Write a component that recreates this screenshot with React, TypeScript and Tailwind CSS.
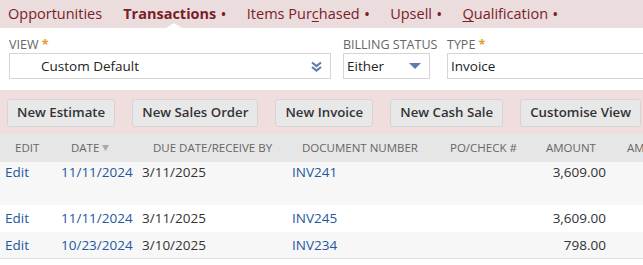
import React from "react";

const tabs = [
  { label: "Opportunities", active: false, dot: false },
  { label: "Transactions", active: true, dot: true },
  { label: "Items Purchased", active: false, dot: true, u: 9 },
  { label: "Upsell", active: false, dot: true },
  { label: "Qualification", active: false, dot: true, u: 0 },
];

const buttons = ["New Estimate", "New Sales Order", "New Invoice", "New Cash Sale", "Customise View"];

const rows = [
  { date: "11/11/2024", due: "3/11/2025", doc: "INV241", amount: "3,609.00", tall: true },
  { date: "11/11/2024", due: "3/11/2025", doc: "INV245", amount: "3,609.00" },
  { date: "10/23/2024", due: "3/10/2025", doc: "INV234", amount: "798.00" },
];

const cols = "grid grid-cols-[56px_81px_150px_148px_95px_82px_1fr]";

function TabLabel({ label, u }: { label: string; u?: number }) {
  if (u === undefined) return <>{label}</>;
  return (
    <>
      {label.slice(0, u)}
      <span className="underline underline-offset-2">{label[u]}</span>
      {label.slice(u + 1)}
    </>
  );
}

export default function App() {
  return (
    <div className="w-[643px] h-[265px] overflow-hidden bg-white font-['Open_Sans',sans-serif]">
      {/* subtabs */}
      <div className="h-[28px] bg-[#ebdcdd] flex items-center pl-[8px] gap-[21px] text-[14.5px] text-[#7b1c28] whitespace-nowrap">
        {tabs.map((t) => (
          <div key={t.label} className={`relative h-full flex items-center ${t.active ? "font-bold" : ""}`}>
            <span>
              <TabLabel label={t.label} u={t.u} />
              {t.dot && <span className="ml-[5px] text-[12px] font-bold">•</span>}
            </span>
            {t.active && (
              <span className="absolute bottom-0 left-1/2 -translate-x-1/2 w-0 h-0 border-x-[8px] border-x-transparent border-b-[5px] border-b-white" />
            )}
          </div>
        ))}
      </div>

      {/* filters */}
      <div className="h-[62px] flex pt-[8px] pl-[9px]">
        <div className="w-[322px]">
          <div className="text-[12.5px] text-[#666] leading-[18px] h-[17px]">
            VIEW <span className="text-[#e39b2e] font-bold">*</span>
          </div>
          <div className="h-[26px] border border-[#d5d5d5] flex items-center pl-[31px] pr-[8px] text-[13.5px] text-[#222]">
            <span className="flex-1">Custom Default</span>
            <svg width="11" height="11" viewBox="0 0 11 11">
              <path d="M1 1.5 L5.5 5 L10 1.5" stroke="#5f7da8" strokeWidth="2.2" fill="none" />
              <path d="M1 6 L5.5 9.5 L10 6" stroke="#5f7da8" strokeWidth="2.2" fill="none" />
            </svg>
          </div>
        </div>
        <div className="w-[87px] ml-[12px]">
          <div className="text-[12.5px] text-[#666] leading-[18px] h-[17px] whitespace-nowrap">BILLING STATUS</div>
          <div className="h-[26px] border border-[#d5d5d5] flex items-center pl-[3px] pr-[8px] text-[13.5px] text-[#222]">
            <span className="flex-1">Either</span>
            <svg width="12" height="7" viewBox="0 0 12 7">
              <path d="M0 0 H12 L6 6 Z" fill="#5f7da8" />
            </svg>
          </div>
        </div>
        <div className="flex-1 ml-[17px]">
          <div className="text-[12.5px] text-[#666] leading-[18px] h-[17px]">
            TYPE <span className="text-[#e39b2e] font-bold">*</span>
          </div>
          <div className="h-[26px] border border-r-0 border-[#d5d5d5] flex items-center pl-[3px] text-[13.5px] text-[#222]">
            Invoice
          </div>
        </div>
      </div>

      {/* buttons */}
      <div className="h-[44px] bg-[#f0dede] flex items-center gap-[17px] pl-[7px] pt-[2px]">
        {buttons.map((b) => (
          <button
            key={b}
            className="h-[28px] px-[9px] rounded-[3px] bg-[#e8e8e8] border border-[#d4d4d4] text-[13.25px] font-semibold text-[#333] whitespace-nowrap"
          >
            {b}
          </button>
        ))}
      </div>

      {/* table */}
      <div className={`${cols} h-[28px] items-center bg-[#e6e6e6] text-[11.5px] text-[#666] whitespace-nowrap`}>
        <div className="pl-[15px]">EDIT</div>
        <div className="pl-[15px] flex items-center">
          DATE
          <svg className="ml-[3px]" width="7" height="6" viewBox="0 0 7 6">
            <path d="M0 0 H7 L3.5 6 Z" fill="#aaa" />
          </svg>
        </div>
        <div className="pl-[16px]">DUE DATE/RECEIVE BY</div>
        <div className="pl-[15px]">DOCUMENT NUMBER</div>
        <div className="pl-[15px]">PO/CHECK #</div>
        <div className="pl-[16px]">AMOUNT</div>
        <div className="pl-[15px]">AMOUNT (FOREIGN CURRENCY)</div>
      </div>
      {rows.map((r, i) => (
        <div
          key={r.doc}
          className={`${cols} text-[13.5px] whitespace-nowrap ${r.tall ? "h-[43px]" : "h-[27px] items-center"} ${
            i % 2 === 0 ? "bg-[#f7f7f7]" : "bg-white"
          } ${i === rows.length - 1 ? "border-b border-[#e3e3e3]" : ""}`}
        >
          <div className="pl-[5px] text-[#24589c]">Edit</div>
          <div className="pl-[5px] text-[#24589c]">{r.date}</div>
          <div className="pl-[5px] text-[#333]">{r.due}</div>
          <div className="pl-[5px] text-[#24589c]">{r.doc}</div>
          <div />
          <div className="pr-[6px] text-right text-[#333]">{r.amount}</div>
          <div />
        </div>
      ))}
    </div>
  );
}
